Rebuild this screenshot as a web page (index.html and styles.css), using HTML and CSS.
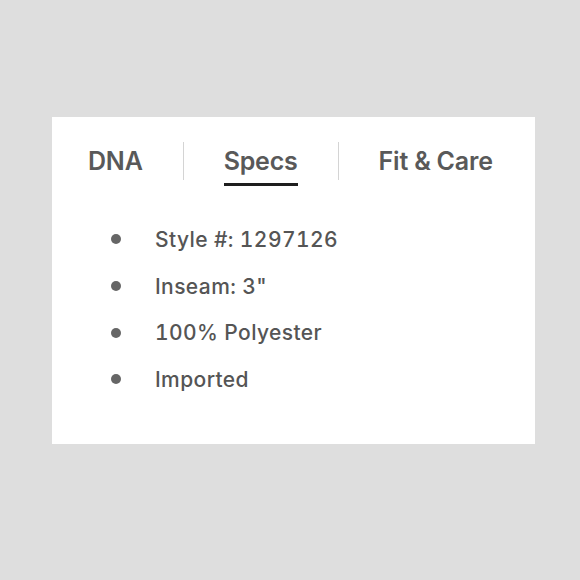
FILE: index.html
```html
<!DOCTYPE html>
<html>
<head>
<meta charset="utf-8">
<link rel="stylesheet" href="styles.css">
</head>
<body>
<div class="card">
  <div class="tabs">
    <div class="tab">DNA</div>
    <div class="tab tab-divided tab-active"><span class="tab-label">Specs</span></div>
    <div class="tab tab-divided">Fit &amp; Care</div>
  </div>
  <ul class="specs">
    <li class="spec">Style #: 1297126</li>
    <li class="spec">Inseam: 3"</li>
    <li class="spec">100% Polyester</li>
    <li class="spec">Imported</li>
  </ul>
</div>
</body>
</html>
```

FILE: styles.css
```css
html, body {
  margin: 0;
  padding: 0;
  background: #dedede;
}
body {
  font-family: Inter, "Liberation Sans", sans-serif;
  padding: 117px 0 0 52px;
  height: 580px;
  box-sizing: border-box;
}
.card {
  width: 483px;
  height: 327px;
  background: #fff;
  box-sizing: border-box;
  padding-top: 25px;
}
.tabs {
  display: flex;
  align-items: center;
  padding-left: 36px;
}
.tab {
  height: 38px;
  display: flex;
  align-items: center;
  padding: 0 40px;
  font-size: 25px;
  font-weight: 600;
  color: #595959;
  letter-spacing: -0.2px;
}
.tab:first-child {
  padding-left: 0;
}
.tab-divided {
  border-left: 1.5px solid #d4d4d4;
}
.tab-active .tab-label {
  position: relative;
}
.tab-active .tab-label::after {
  content: "";
  position: absolute;
  left: 0;
  right: 0;
  bottom: -10px;
  height: 3px;
  background: #1e1e1e;
}
.specs {
  list-style: none;
  margin: 0;
  padding: 36px 0 0 59px;
}
.spec {
  display: flex;
  align-items: center;
  gap: 34px;
  height: 46.7px;
  font-size: 21px;
  font-weight: 500;
  color: #555;
  letter-spacing: 0.4px;
  font-feature-settings: "tnum";
}
.spec::before {
  content: "";
  width: 10px;
  height: 10px;
  border-radius: 50%;
  background: #666;
  flex: none;
}
```
